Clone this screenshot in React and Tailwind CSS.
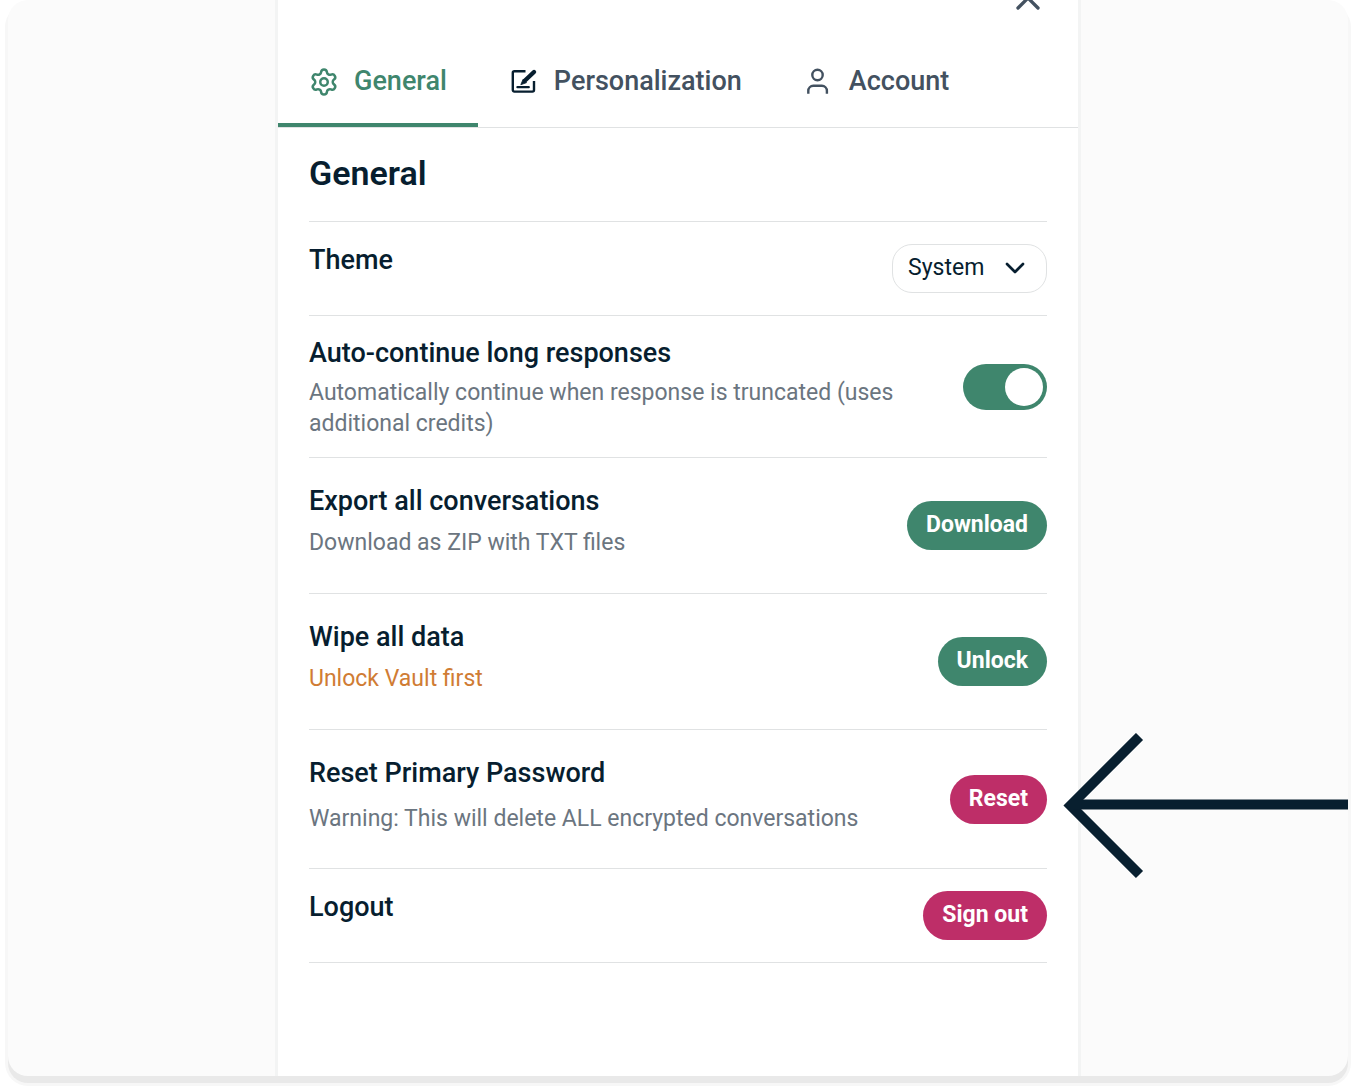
import { useState } from 'react';
import { ChevronDown, Settings, X } from 'lucide-react';

const EditIcon = () => (
  <svg viewBox="0 0 30 30" className="size-[30px] shrink-0 text-[#071e2f]" fill="none" stroke="currentColor" strokeWidth="2.4" strokeLinecap="round" aria-hidden="true">
    <path d="M16.500 4.200H5.400a1.600 1.600 0 0 0-1.600 1.600V23a1.600 1.600 0 0 0 1.600 1.600h18a1.600 1.600 0 0 0 1.600-1.600V14" strokeLinecap="butt" />
    <path d="M8.400 20.200h11.400" strokeWidth="2.200" />
    <path d="M25 5 16 13.500" strokeWidth="4.400" />
    <path d="m14 12.500-2.200 5.200 5.400-1.900z" fill="currentColor" strokeWidth="0.800" strokeLinejoin="round" />
  </svg>
);

const UserIcon = () => (
  <svg viewBox="0 0 30 30" className="size-[30px] shrink-0" fill="none" stroke="currentColor" strokeWidth="2.4" aria-hidden="true">
    <circle cx="13.5" cy="8" r="5.2" />
    <path d="M4.300 26.800v-3a5 5 0 0 1 5-5h8.600a5 5 0 0 1 5 5v3" />
  </svg>
);

const TABS = [
  { id: 'general', label: 'General', icon: <Settings className="size-[30px] shrink-0" strokeWidth={2} /> },
  { id: 'personalization', label: 'Personalization', icon: <EditIcon /> },
  { id: 'account', label: 'Account', icon: <UserIcon /> },
];

const BUTTON_COLORS = {
  green: 'bg-[#3f866d] hover:bg-[#35735d]',
  pink: 'bg-[#be2e68] hover:bg-[#a62559]',
};

const PillButton = ({ color, children }) => (
  <button type="button" className={`${BUTTON_COLORS[color]} h-[49px] shrink-0 rounded-full px-[19px] text-[23px] font-bold text-white`}>
    {children}
  </button>
);

const RowTitle = ({ children, ...props }) => (
  <h3 className="text-[27px] leading-8 font-medium" {...props}>{children}</h3>
);

const PointerArrow = () => (
  <svg viewBox="0 0 285 145" className="pointer-events-none absolute top-[3px] left-full ml-4 h-[145px] w-[285px]" fill="none" stroke="#081f2f" strokeWidth="10" aria-hidden="true">
    <path d="M76.500 3.500 7.500 72.500l69 69" />
    <path d="M10 71.500H285" />
  </svg>
);

const App = () => {
  const [activeTab, setActiveTab] = useState('general');
  const [theme, setTheme] = useState('system');
  const [autoContinue, setAutoContinue] = useState(true);

  return (
    <div className="flex min-h-screen bg-white px-2 pb-4 font-['Roboto',sans-serif] text-[#071e2f]">
      <div className="flex flex-1 overflow-hidden rounded-[20px] bg-[#fbfbfb] shadow-[0_7px_0_0_#e9e9e9,0_7px_0_3px_#f7f7f7]">
        <main className="mx-auto w-full max-w-[800px] bg-white shadow-[0_0_0_3px_#f3f4f4]">
          {/* Close bar, scrolled partly out of view */}
          <div className="-mt-10 flex h-[76px] items-center justify-end pr-[30px]">
            <button type="button" aria-label="Close" className="text-[#435160]">
              <X className="size-10" strokeWidth={2} />
            </button>
          </div>

          {/* Tabs */}
          <div role="tablist" className="flex h-[92px] border-b border-[#e0e2e3]">
            {TABS.map(tab => (
              <button
                key={tab.id}
                type="button"
                role="tab"
                aria-selected={activeTab === tab.id}
                onClick={() => setActiveTab(tab.id)}
                className={`flex items-center gap-[15px] border-b-4 px-[31px] pt-1 text-[27px] font-medium ${activeTab === tab.id ? 'border-[#3f866d] text-[#3f866d]' : 'border-transparent text-[#435160]'}`}
              >
                {tab.icon}
                {tab.label}
              </button>
            ))}
          </div>

          <section className="px-[31px]">
            <h2 className="flex h-[93px] items-center pb-[3px] text-[34px] font-semibold">General</h2>

            <div className="divide-y divide-[#e0e2e3] border-y border-[#e0e2e3]">
              <div className="flex min-h-[94px] items-start justify-between pt-[22px]">
                <label htmlFor="theme" className="text-[27px] leading-8 font-medium">Theme</label>
                <div className="relative">
                  <select
                    id="theme"
                    value={theme}
                    onChange={e => setTheme(e.target.value)}
                    className="h-[49px] w-[155px] appearance-none rounded-[20px] border border-[#e0e2e3] bg-white pl-[15px] text-[23px]"
                  >
                    <option value="system">System</option>
                    <option value="light">Light</option>
                    <option value="dark">Dark</option>
                  </select>
                  <ChevronDown className="pointer-events-none absolute top-2 right-4 size-8" strokeWidth={2} />
                </div>
              </div>

              <div className="flex min-h-[142px] items-center justify-between gap-8">
                <div className="pt-0.5">
                  <RowTitle id="auto-title">Auto-continue long responses</RowTitle>
                  <p className="mt-2 text-[23px] leading-[31px] text-[#6b7580]">
                    Automatically continue when response is truncated (uses additional credits)
                  </p>
                </div>
                <label className="relative h-[46px] w-[84px] shrink-0 cursor-pointer">
                  <input
                    type="checkbox"
                    role="switch"
                    aria-labelledby="auto-title"
                    checked={autoContinue}
                    onChange={e => setAutoContinue(e.target.checked)}
                    className="peer sr-only"
                  />
                  <span className="block h-full rounded-full bg-gray-300 peer-checked:bg-[#3f866d]" />
                  <span className="absolute top-1 left-1 size-[38px] rounded-full bg-white transition-transform peer-checked:translate-x-[38px]" />
                </label>
              </div>

              <div className="flex min-h-[136px] items-center justify-between">
                <div className="pb-2">
                  <RowTitle>Export all conversations</RowTitle>
                  <p className="mt-2.5 text-[23px] leading-[31px] text-[#6b7580]">Download as ZIP with TXT files</p>
                </div>
                <PillButton color="green">Download</PillButton>
              </div>

              <div className="flex min-h-[136px] items-center justify-between">
                <div className="pb-2">
                  <RowTitle>Wipe all data</RowTitle>
                  <p className="mt-2.5 text-[23px] leading-[31px] text-[#d07c34]">Unlock Vault first</p>
                </div>
                <PillButton color="green">Unlock</PillButton>
              </div>

              <div className="relative flex min-h-[139px] items-center justify-between">
                <div className="pb-2">
                  <RowTitle>Reset Primary Password</RowTitle>
                  <p className="mt-3.5 text-[23px] leading-[31px] text-[#6b7580]">Warning: This will delete ALL encrypted conversations</p>
                </div>
                <PillButton color="pink">Reset</PillButton>
                <PointerArrow />
              </div>

              <div className="flex min-h-[93px] items-start justify-between pt-[22px]">
                <RowTitle>Logout</RowTitle>
                <PillButton color="pink">Sign out</PillButton>
              </div>
            </div>
          </section>
        </main>
      </div>
    </div>
  );
};

export default App;
